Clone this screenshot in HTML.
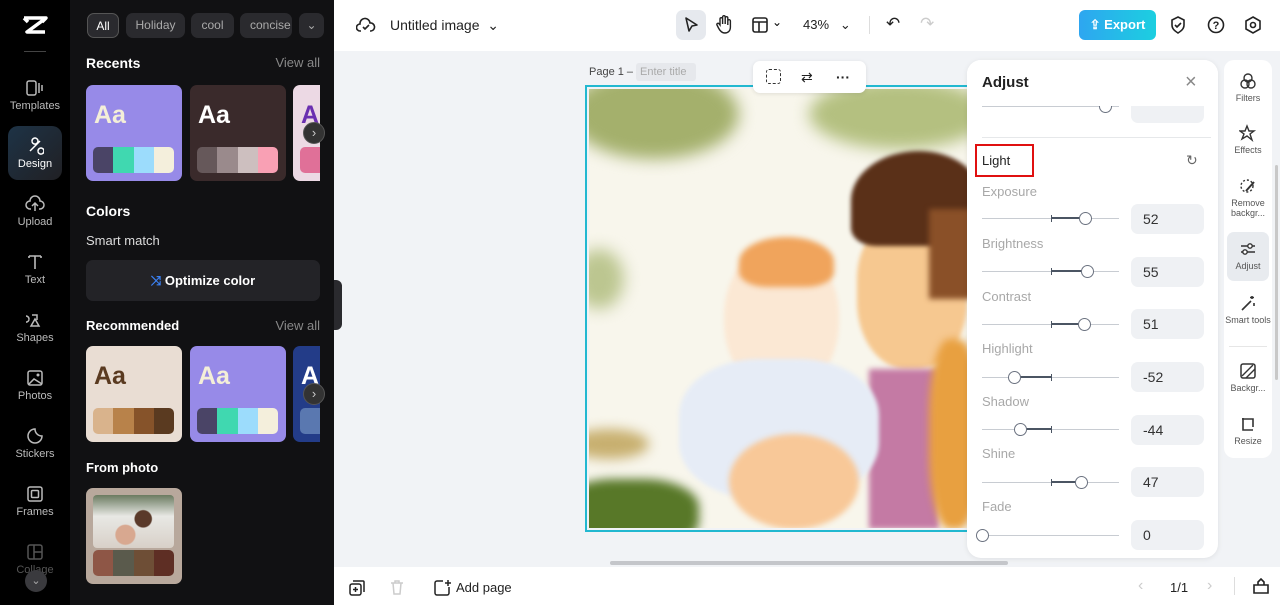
<!DOCTYPE html>
<html><head><meta charset="utf-8"><style>
*{box-sizing:border-box;margin:0;padding:0}
body{width:1280px;height:605px;overflow:hidden;font-family:"Liberation Sans",sans-serif;background:#f1f3f6;position:relative}
.abs{position:absolute}
.rail{left:0;top:0;width:70px;height:605px;background:#000}
.ri{position:absolute;left:0;width:70px;text-align:center;color:#bbb;font-size:11px}
.ri svg{display:block;margin:0 auto 3px}
.panel{left:70px;top:0;width:264px;height:605px;background:#111113;color:#fff}
.chip{position:absolute;top:13px;height:25px;border-radius:7px;background:#2a2a2e;color:#aaa;font-size:12px;line-height:25px;text-align:center}
.h{position:absolute;font-weight:bold;font-size:14px;color:#fff}
.va{position:absolute;right:14px;font-size:13px;color:#888}
.card{position:absolute;width:96px;height:96px;border-radius:7px;overflow:hidden}
.card .aa{position:absolute;left:8px;top:16px;font-size:25px;font-weight:bold}
.sw{position:absolute;left:7px;top:62px;width:81px;height:26px;border-radius:5px;overflow:hidden;display:flex}
.sw i{flex:1}
.arrow{position:absolute;width:22px;height:22px;border-radius:50%;background:#333;border:1px solid #555;color:#ccc;font-size:13px;line-height:19px;text-align:center}
.top{left:334px;top:0;width:946px;height:51px;background:#fff}
.adj{left:967px;top:60px;width:251px;height:498px;background:#fff;border-radius:14px;box-shadow:0 1px 6px rgba(0,0,0,.08);overflow:hidden}
.lbl{position:absolute;left:15px;font-size:13px;color:#a8a8a8}
.trk{position:absolute;left:15px;width:137px;height:1px;background:#c8ccd2}
.knob{position:absolute;width:13px;height:13px;border-radius:50%;background:#fff;border:1px solid #6b7280}
.fill{position:absolute;height:2px;background:#4b5563}
.tick{position:absolute;width:1px;height:7px;background:#4b5563}
.val{position:absolute;left:164px;width:73px;height:30px;border-radius:7px;background:#eff1f4;font-size:14px;color:#333;line-height:30px;padding-left:12px}
.tools{left:1224px;top:60px;width:48px;height:398px;background:#fff;border-radius:10px}
.ti{position:absolute;left:0;width:48px;text-align:center;font-size:9px;color:#555;line-height:10px}
.ti svg{display:block;margin:0 auto 3px}
.bot{left:334px;top:567px;width:946px;height:38px;background:#fff}
.b{position:absolute}
</style></head><body>
<div class="abs rail">
 <svg class="abs" style="left:22px;top:15px" width="26" height="20" viewBox="0 0 26 20"><path d="M2 3h22L5 17h18M2 3l4 4M24 3l-4 4" stroke="#fff" stroke-width="3.5" fill="none" stroke-linejoin="round"/></svg>
 <div class="abs" style="left:24px;top:51px;width:22px;height:1px;background:#444"></div>
 <div class="ri" style="top:79px"><svg width="20" height="18"><rect x="2" y="2" width="9" height="14" rx="2" stroke="#bbb" fill="none" stroke-width="1.5"/><path d="M14 4v10M17 6v6" stroke="#bbb" stroke-width="1.5"/></svg>Templates</div>
 <div class="abs" style="left:8px;top:126px;width:54px;height:54px;border-radius:10px;background:linear-gradient(135deg,#1e3346,#202024)"></div>
 <div class="ri" style="top:137px;color:#fff"><svg width="18" height="18"><path d="M4 14L14 4M6 4a3 3 0 1 1 0 .1M12 14a3 3 0 1 1 0 .1" stroke="#fff" fill="none" stroke-width="1.5"/></svg>Design</div>
 <div class="ri" style="top:195px"><svg width="20" height="18"><path d="M6 14H5a4 4 0 0 1 0-8 5 5 0 0 1 10 0 4 4 0 0 1 0 8h-1M10 16V9M7 11l3-3 3 3" stroke="#bbb" fill="none" stroke-width="1.5"/></svg>Upload</div>
 <div class="ri" style="top:253px"><svg width="18" height="18"><path d="M3 3h12M9 3v13M3 3v2M15 3v2" stroke="#bbb" fill="none" stroke-width="1.6"/></svg>Text</div>
 <div class="ri" style="top:311px"><svg width="18" height="18"><path d="M6 4l5 0 0 5M9 8l4 7H5z M3 8a3 3 0 1 0 0 .1" stroke="#bbb" fill="none" stroke-width="1.5"/></svg>Shapes</div>
 <div class="ri" style="top:369px"><svg width="18" height="18"><rect x="2" y="2" width="14" height="14" rx="2" stroke="#bbb" fill="none" stroke-width="1.5"/><path d="M3 15l5-5 8 5" stroke="#bbb" fill="none" stroke-width="1.5"/><circle cx="12" cy="6" r="1.5" fill="#bbb"/></svg>Photos</div>
 <div class="ri" style="top:427px"><svg width="18" height="18"><path d="M9 2a7 7 0 1 0 7 7c-4 0-7-3-7-7z" stroke="#bbb" fill="none" stroke-width="1.5"/></svg>Stickers</div>
 <div class="ri" style="top:485px"><svg width="18" height="18"><rect x="2" y="2" width="14" height="14" rx="2" stroke="#bbb" fill="none" stroke-width="1.5"/><rect x="5.5" y="5.5" width="7" height="7" rx="1" stroke="#bbb" fill="none" stroke-width="1.5"/></svg>Frames</div>
 <div class="ri" style="top:543px;color:#555"><svg width="18" height="18"><rect x="2" y="2" width="14" height="14" rx="2" stroke="#555" fill="none" stroke-width="1.5"/><path d="M8 2v14M8 9h8" stroke="#555" stroke-width="1.5"/></svg>Collage</div>
 <div class="abs" style="left:25px;top:570px;width:22px;height:22px;border-radius:50%;background:#3a3a3e;color:#aaa;font-size:11px;text-align:center;line-height:22px">⌄</div>
</div>
<div class="abs panel">
 <div class="chip" style="left:17px;width:32px;background:#2a2a2e;border:1px solid #555;color:#fff">All</div>
 <div class="chip" style="left:56px;width:59px">Holiday</div>
 <div class="chip" style="left:121px;width:43px">cool</div>
 <div class="chip" style="left:170px;width:52px;overflow:hidden;text-align:left;padding-left:10px">concise</div>
 <div class="chip" style="left:229px;width:25px">⌄</div>
 <div class="h" style="left:16px;top:55px">Recents</div><div class="va" style="top:55px">View all</div>
 <div class="card" style="left:16px;top:85px;background:#978ae8"><div class="aa" style="color:#f4efd8">Aa</div><div class="sw"><i style="background:#4a4466"></i><i style="background:#40d8b0"></i><i style="background:#9cdcfc"></i><i style="background:#f4efdc"></i></div></div>
 <div class="card" style="left:120px;top:85px;background:#3a2a2b"><div class="aa" style="color:#fff">Aa</div><div class="sw"><i style="background:#66585a"></i><i style="background:#9a8a8c"></i><i style="background:#cdbfbf"></i><i style="background:#f9a0b4"></i></div></div>
 <div class="card" style="left:223px;top:85px;width:27px;border-radius:7px 0 0 7px;background:#ecd9e4"><div class="aa" style="color:#6a2fb0">A</div><div class="sw" style="background:#e07098"></div></div>
 <div class="arrow" style="left:233px;top:122px">›</div>
 <div class="h" style="left:16px;top:203px">Colors</div>
 <div class="abs" style="left:16px;top:233px;font-size:13px;color:#ddd">Smart match</div>
 <div class="abs" style="left:16px;top:260px;width:234px;height:41px;border-radius:7px;background:#232327;text-align:center;line-height:41px;font-size:13px;font-weight:bold"><span style="color:#3b82f6">⤨</span> Optimize color</div>
 <div class="h" style="left:16px;top:318px;font-size:13px">Recommended</div><div class="va" style="top:318px">View all</div>
 <div class="card" style="left:16px;top:346px;background:#e9ddd3"><div class="aa" style="color:#5a3a20">Aa</div><div class="sw"><i style="background:#d9b38c"></i><i style="background:#b8824a"></i><i style="background:#86532a"></i><i style="background:#5a3a20"></i></div></div>
 <div class="card" style="left:120px;top:346px;background:#978ae8"><div class="aa" style="color:#f4efd8">Aa</div><div class="sw"><i style="background:#4a4466"></i><i style="background:#40d8b0"></i><i style="background:#9cdcfc"></i><i style="background:#f4efdc"></i></div></div>
 <div class="card" style="left:223px;top:346px;width:27px;border-radius:7px 0 0 7px;background:#233c88"><div class="aa" style="color:#fff">A</div><div class="sw" style="background:#5a78b0"></div></div>
 <div class="arrow" style="left:233px;top:383px">›</div>
 <div class="h" style="left:16px;top:460px;font-size:13px">From photo</div>
 <div class="card" style="left:16px;top:488px;background:#b8a89c"><div class="abs" style="left:7px;top:7px;width:81px;height:53px;border-radius:4px;background:radial-gradient(circle at 62% 45%,#5a3a2a 0 14%,transparent 16%),radial-gradient(circle at 40% 75%,#d8a890 0 15%,transparent 17%),linear-gradient(#6a7a60,#e8e8e4 40%,#d8d0c8)"></div><div class="sw"><i style="background:#8e5646"></i><i style="background:#5a5a4c"></i><i style="background:#6e4e36"></i><i style="background:#5e2e24"></i></div></div>
 <div class="abs" style="left:264px;top:280px;width:8px;height:50px;border-radius:0 6px 6px 0;background:#2a2a2e"></div>
</div>
<div class="abs top">
 <svg class="abs" style="left:22px;top:16px" width="20" height="18"><path d="M5 15H4a3.5 3.5 0 0 1 0-7 5 5 0 0 1 10-1 4 4 0 0 1 1 8h-1M7 11l2 2 4-4" stroke="#222" fill="none" stroke-width="1.6"/></svg>
 <div class="abs" style="left:56px;top:17px;font-size:14px;color:#222">Untitled image &nbsp;⌄</div>
 <div class="abs" style="left:342px;top:10px;width:30px;height:30px;border-radius:7px;background:#e6e9ee"></div>
 <svg class="abs" style="left:349px;top:16px" width="16" height="18"><path d="M3 2l11 7-5 1-3 5z" stroke="#222" fill="none" stroke-width="1.6" stroke-linejoin="round"/></svg>
 <svg class="abs" style="left:381px;top:14px" width="18" height="20"><path d="M5 11V5a1.3 1.3 0 0 1 2.6 0v5V3a1.3 1.3 0 0 1 2.6 0v7V4a1.3 1.3 0 0 1 2.6 0v7V7a1.3 1.3 0 0 1 2.6 0v6c0 4-2.5 6-5.5 6S5 17 3.5 14L2 11a1.2 1.2 0 0 1 2-1.3z" stroke="#222" fill="none" stroke-width="1.4"/></svg>
 <svg class="abs" style="left:418px;top:17px" width="16" height="16"><rect x="1" y="1" width="14" height="14" rx="2" stroke="#222" fill="none" stroke-width="1.6"/><path d="M1 5h14M7 5v10" stroke="#222" stroke-width="1.6"/></svg>
 <div class="abs" style="left:438px;top:15px;font-size:12px">⌄</div>
 <div class="abs" style="left:469px;top:17px;font-size:13px;color:#222">43% &nbsp;&nbsp;⌄</div>
 <div class="abs" style="left:535px;top:16px;width:1px;height:18px;background:#ddd"></div>
 <div class="abs" style="left:552px;top:14px;font-size:17px;color:#222">↶</div>
 <div class="abs" style="left:586px;top:14px;font-size:17px;color:#ccc">↷</div>
 <div class="abs" style="left:745px;top:10px;width:77px;height:30px;border-radius:6px;background:linear-gradient(90deg,#2ea6f0,#1ccfe0);color:#fff;font-size:13px;font-weight:bold;line-height:30px;text-align:center">⇪ Export</div>
 <svg class="abs" style="left:836px;top:16px" width="16" height="18"><path d="M8 1l6 3v5c0 4-3 6-6 8-3-2-6-4-6-8V4z M5 9l2 2 4-4" stroke="#222" fill="none" stroke-width="1.6"/></svg>
 <svg class="abs" style="left:873px;top:16px" width="18" height="18"><circle cx="9" cy="9" r="7.5" stroke="#222" fill="none" stroke-width="1.6"/><text x="9" y="13" font-size="11" text-anchor="middle" font-family="Liberation Sans" font-weight="bold" fill="#222">?</text></svg>
 <svg class="abs" style="left:910px;top:16px" width="18" height="18"><path d="M9 1l7 4v8l-7 4-7-4V5z" stroke="#222" fill="none" stroke-width="1.6"/><circle cx="9" cy="9" r="2.5" stroke="#222" fill="none" stroke-width="1.6"/></svg>
</div>
<div class="abs" style="left:589px;top:66px;font-size:11px;color:#444">Page 1 –</div>
<div class="abs" style="left:636px;top:63px;width:60px;height:18px;background:#e6e8ec;border-radius:3px;font-size:11px;color:#aaa;line-height:18px;padding-left:4px">Enter title</div>
<div class="abs" style="left:585px;top:85px;width:385px;height:447px;border:2px solid #22b8d0"></div>
<div class="abs" style="left:589px;top:89px;width:378px;height:439px;overflow:hidden;background:#f8f6ec">
 <div class="b" style="left:-20px;top:-20px;width:170px;height:90px;border-radius:50%;background:#a4b06c;filter:blur(8px)"></div>
 <div class="b" style="left:220px;top:-10px;width:180px;height:70px;border-radius:50%;background:#b4c080;filter:blur(8px)"></div>
 <div class="b" style="left:-20px;top:450px;width:1px;height:1px"></div>
 <div class="b" style="left:-30px;top:390px;width:140px;height:70px;border-radius:40%;background:#587828;filter:blur(5px)"></div>
 <div class="b" style="left:-15px;top:160px;width:50px;height:60px;border-radius:50%;background:#bcc690;filter:blur(8px)"></div>
 <div class="b" style="left:-20px;top:340px;width:80px;height:30px;border-radius:50%;background:#c8b070;filter:blur(6px)"></div>
 <div class="b" style="left:268px;top:130px;width:110px;height:150px;border-radius:40% 40% 45% 45%;background:#f6c890;filter:blur(2px)"></div>
 <div class="b" style="left:262px;top:62px;width:130px;height:95px;border-radius:55% 50% 20% 20%;background:#5a3018;filter:blur(2px)"></div>
 <div class="b" style="left:340px;top:120px;width:45px;height:90px;background:#8a5028;filter:blur(3px)"></div>
 <div class="b" style="left:280px;top:280px;width:70px;height:160px;background:#c47aa4;filter:blur(3px)"></div>
 <div class="b" style="left:340px;top:250px;width:50px;height:190px;border-radius:40%;background:#e8a040;filter:blur(4px)"></div>
 <div class="b" style="left:135px;top:155px;width:115px;height:150px;border-radius:48%;background:#fbe8d4;filter:blur(2px)"></div>
 <div class="b" style="left:150px;top:148px;width:95px;height:50px;border-radius:50% 50% 30% 30%;background:#f0a45c;filter:blur(3px)"></div>
 <div class="b" style="left:90px;top:270px;width:200px;height:140px;border-radius:40%;background:#e6ecf6;filter:blur(2px)"></div>
 <div class="b" style="left:140px;top:345px;width:130px;height:95px;border-radius:50%;background:#f8c898;filter:blur(3px)"></div>
</div>
<div class="abs" style="left:753px;top:61px;width:113px;height:32px;background:#fff;border-radius:7px;box-shadow:0 1px 4px rgba(0,0,0,.1);font-size:14px;color:#222;line-height:32px"><span style="position:absolute;left:13px;top:0;border:1.5px dashed #333;width:15px;height:15px;margin-top:8px;border-radius:3px"></span><span style="position:absolute;left:48px">⇄</span><span style="position:absolute;left:83px;font-weight:bold">···</span></div>
<div class="abs adj">
 <div class="trk" style="top:46px"></div><div class="knob" style="left:132px;top:40px"></div><div class="val" style="top:33px"></div>
 <div class="abs" style="left:0;top:0;width:251px;height:46px;background:#fff"></div>
 <div class="abs" style="left:15px;top:14px;font-size:15px;font-weight:bold;color:#222">Adjust</div>
 <div class="abs" style="left:218px;top:12px;font-size:20px;color:#888;line-height:20px">×</div>
 <div class="abs" style="left:15px;top:77px;width:229px;height:1px;background:#e6e8ea"></div>
 <div class="abs" style="left:8px;top:84px;width:59px;height:33px;border:2px solid #e01010"></div>
 <div class="abs" style="left:15px;top:93px;font-size:13px;color:#222">Light</div>
 <div class="abs" style="left:219px;top:92px;font-size:14px;color:#666">↻</div>
 <div class="lbl" style="top:124px">Exposure</div><div class="trk" style="top:158px"></div><div class="fill" style="left:84px;top:157px;width:35px"></div><div class="tick" style="left:84px;top:155px"></div><div class="knob" style="left:112px;top:152px"></div><div class="val" style="top:144px">52</div>
 <div class="lbl" style="top:176px">Brightness</div><div class="trk" style="top:211px"></div><div class="fill" style="left:84px;top:210px;width:37px"></div><div class="tick" style="left:84px;top:208px"></div><div class="knob" style="left:114px;top:205px"></div><div class="val" style="top:197px">55</div>
 <div class="lbl" style="top:229px">Contrast</div><div class="trk" style="top:264px"></div><div class="fill" style="left:84px;top:263px;width:34px"></div><div class="tick" style="left:84px;top:261px"></div><div class="knob" style="left:111px;top:258px"></div><div class="val" style="top:249px">51</div>
 <div class="lbl" style="top:281px">Highlight</div><div class="trk" style="top:317px"></div><div class="fill" style="left:48px;top:316px;width:36px"></div><div class="tick" style="left:84px;top:314px"></div><div class="knob" style="left:41px;top:311px"></div><div class="val" style="top:302px">-52</div>
 <div class="lbl" style="top:334px">Shadow</div><div class="trk" style="top:369px"></div><div class="fill" style="left:54px;top:368px;width:30px"></div><div class="tick" style="left:84px;top:366px"></div><div class="knob" style="left:47px;top:363px"></div><div class="val" style="top:355px">-44</div>
 <div class="lbl" style="top:386px">Shine</div><div class="trk" style="top:422px"></div><div class="fill" style="left:84px;top:421px;width:31px"></div><div class="tick" style="left:84px;top:419px"></div><div class="knob" style="left:108px;top:416px"></div><div class="val" style="top:407px">47</div>
 <div class="lbl" style="top:439px">Fade</div><div class="trk" style="top:475px"></div><div class="knob" style="left:9px;top:469px"></div><div class="val" style="top:460px">0</div>
</div>
<div class="abs tools">
 <div class="ti" style="top:12px"><svg width="18" height="18"><circle cx="9" cy="6" r="4" stroke="#333" fill="none" stroke-width="1.4"/><circle cx="6" cy="12" r="4" stroke="#333" fill="none" stroke-width="1.4"/><circle cx="12" cy="12" r="4" stroke="#333" fill="none" stroke-width="1.4"/></svg>Filters</div>
 <div class="ti" style="top:64px"><svg width="18" height="18"><path d="M8 2l2 5 5 0-4 3 2 6-5-4-5 3 2-5-4-3h5z" stroke="#333" fill="none" stroke-width="1.4"/></svg>Effects</div>
 <div class="ti" style="top:117px"><svg width="18" height="18"><circle cx="8" cy="9" r="6" stroke="#333" fill="none" stroke-width="1.4" stroke-dasharray="2 2"/><path d="M7 14l8-9" stroke="#333" stroke-width="2"/></svg>Remove backgr...</div>
 <div class="abs" style="left:3px;top:172px;width:42px;height:49px;border-radius:7px;background:#e8ebef"></div>
 <div class="ti" style="top:180px"><svg width="18" height="18"><path d="M2 6h14M2 12h14" stroke="#333" stroke-width="1.5"/><circle cx="11" cy="6" r="2.2" fill="#fff" stroke="#333" stroke-width="1.4"/><circle cx="6" cy="12" r="2.2" fill="#fff" stroke="#333" stroke-width="1.4"/></svg>Adjust</div>
 <div class="ti" style="top:234px"><svg width="18" height="18"><path d="M3 16l9-9M13 2v3M11 3.5h4M15 9v3" stroke="#333" stroke-width="1.6"/></svg>Smart tools</div>
 <div class="abs" style="left:5px;top:286px;width:38px;height:1px;background:#e6e6e6"></div>
 <div class="ti" style="top:302px"><svg width="18" height="18"><rect x="2" y="2" width="14" height="14" rx="2" stroke="#333" fill="none" stroke-width="1.5"/><path d="M3 14L14 3M7 16l9-9" stroke="#333" stroke-width="1.4"/></svg>Backgr...</div>
 <div class="ti" style="top:355px"><svg width="18" height="18"><path d="M4 3v12h10M3 4h11v8" stroke="#333" fill="none" stroke-width="1.6"/></svg>Resize</div>
</div>
<div class="abs" style="left:1275px;top:165px;width:3px;height:215px;background:#c8c8c8;border-radius:2px"></div>
<div class="abs" style="left:610px;top:561px;width:398px;height:4px;border-radius:2px;background:#c4c6ca"></div>
<div class="abs bot">
 <svg class="abs" style="left:15px;top:13px" width="16" height="16"><rect x="1" y="4" width="11" height="11" rx="2" stroke="#222" fill="none" stroke-width="1.5"/><path d="M4 1h10a1 1 0 0 1 1 1v10M6.5 7v5M4 9.5h5" stroke="#222" fill="none" stroke-width="1.5"/></svg>
 <svg class="abs" style="left:55px;top:12px" width="16" height="17"><path d="M2 4h12M6 4V2h4v2M4 4l1 11h6l1-11" stroke="#ccc" fill="none" stroke-width="1.5"/></svg>
 <svg class="abs" style="left:100px;top:12px" width="18" height="18"><path d="M15 8v6a2 2 0 0 1-2 2H3a2 2 0 0 1-2-2V4a2 2 0 0 1 2-2h6M14 1v6M11 4h6" stroke="#222" fill="none" stroke-width="1.5"/></svg>
 <div class="abs" style="left:122px;top:13px;font-size:13px;color:#222">Add page</div>
 <div class="abs" style="left:804px;top:10px;font-size:16px;color:#ccc">‹</div>
 <div class="abs" style="left:836px;top:13px;font-size:13px;color:#222">1/1</div>
 <div class="abs" style="left:873px;top:10px;font-size:16px;color:#ccc">›</div>
 <div class="abs" style="left:900px;top:10px;width:1px;height:18px;background:#ddd"></div>
 <svg class="abs" style="left:919px;top:11px" width="16" height="16"><path d="M1 7h14v8H1zM5 7V4l3-3 3 3v3" stroke="#222" fill="none" stroke-width="1.6"/></svg>
</div>
</body></html>
